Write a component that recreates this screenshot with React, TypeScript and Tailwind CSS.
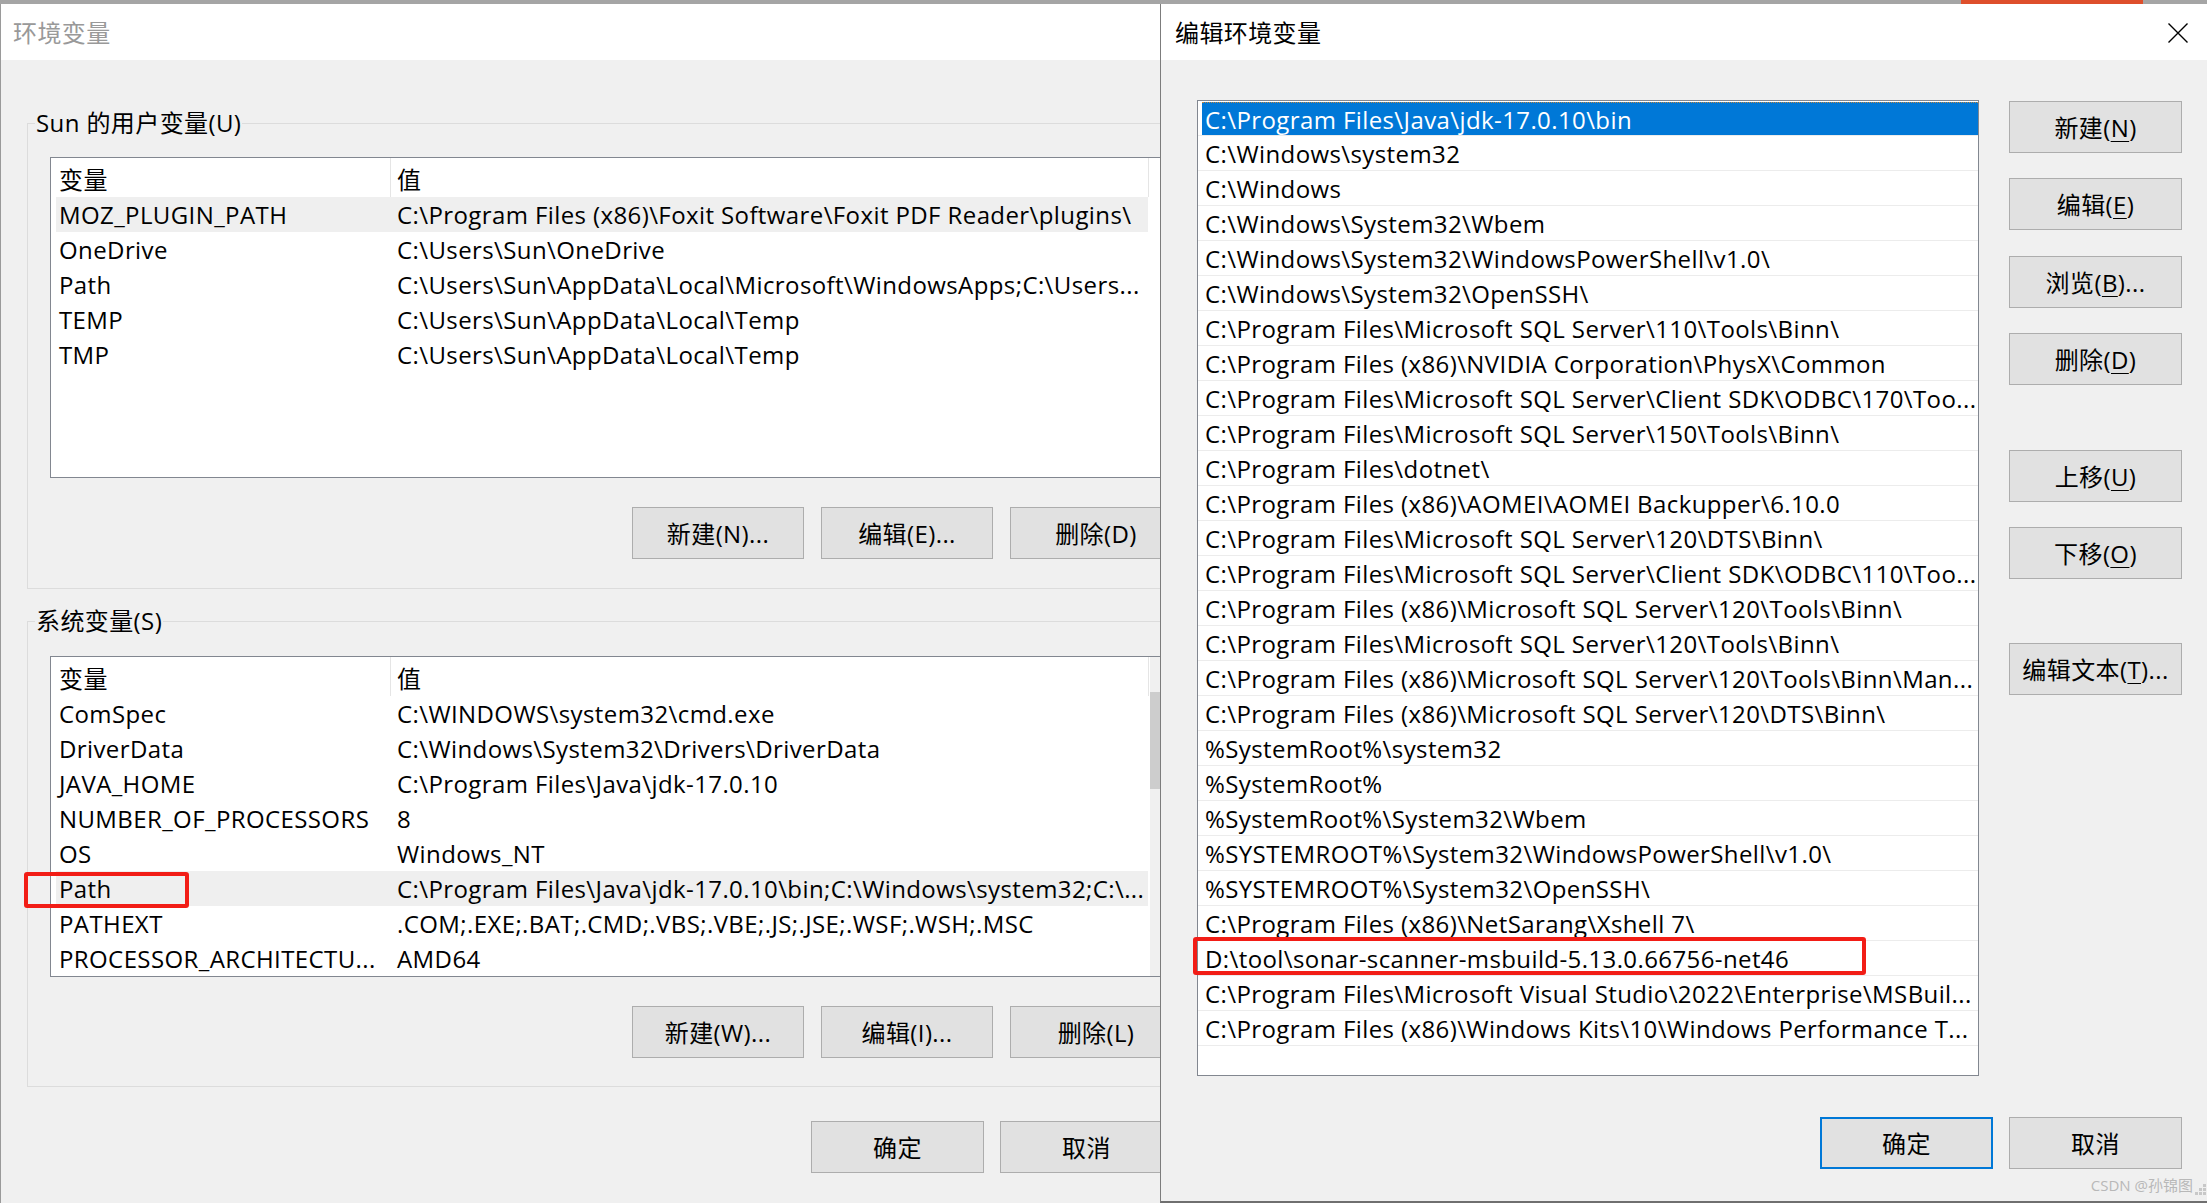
import type { ReactNode } from "react"

const userVars = [
  ["MOZ_PLUGIN_PATH", "C:\\Program Files (x86)\\Foxit Software\\Foxit PDF Reader\\plugins\\"],
  ["OneDrive", "C:\\Users\\Sun\\OneDrive"],
  ["Path", "C:\\Users\\Sun\\AppData\\Local\\Microsoft\\WindowsApps;C:\\Users..."],
  ["TEMP", "C:\\Users\\Sun\\AppData\\Local\\Temp"],
  ["TMP", "C:\\Users\\Sun\\AppData\\Local\\Temp"],
]

const sysVars = [
  ["ComSpec", "C:\\WINDOWS\\system32\\cmd.exe"],
  ["DriverData", "C:\\Windows\\System32\\Drivers\\DriverData"],
  ["JAVA_HOME", "C:\\Program Files\\Java\\jdk-17.0.10"],
  ["NUMBER_OF_PROCESSORS", "8"],
  ["OS", "Windows_NT"],
  ["Path", "C:\\Program Files\\Java\\jdk-17.0.10\\bin;C:\\Windows\\system32;C:\\..."],
  ["PATHEXT", ".COM;.EXE;.BAT;.CMD;.VBS;.VBE;.JS;.JSE;.WSF;.WSH;.MSC"],
  ["PROCESSOR_ARCHITECTU...", "AMD64"],
]

const paths = [
  "C:\\Program Files\\Java\\jdk-17.0.10\\bin",
  "C:\\Windows\\system32",
  "C:\\Windows",
  "C:\\Windows\\System32\\Wbem",
  "C:\\Windows\\System32\\WindowsPowerShell\\v1.0\\",
  "C:\\Windows\\System32\\OpenSSH\\",
  "C:\\Program Files\\Microsoft SQL Server\\110\\Tools\\Binn\\",
  "C:\\Program Files (x86)\\NVIDIA Corporation\\PhysX\\Common",
  "C:\\Program Files\\Microsoft SQL Server\\Client SDK\\ODBC\\170\\Too...",
  "C:\\Program Files\\Microsoft SQL Server\\150\\Tools\\Binn\\",
  "C:\\Program Files\\dotnet\\",
  "C:\\Program Files (x86)\\AOMEI\\AOMEI Backupper\\6.10.0",
  "C:\\Program Files\\Microsoft SQL Server\\120\\DTS\\Binn\\",
  "C:\\Program Files\\Microsoft SQL Server\\Client SDK\\ODBC\\110\\Too...",
  "C:\\Program Files (x86)\\Microsoft SQL Server\\120\\Tools\\Binn\\",
  "C:\\Program Files\\Microsoft SQL Server\\120\\Tools\\Binn\\",
  "C:\\Program Files (x86)\\Microsoft SQL Server\\120\\Tools\\Binn\\Man...",
  "C:\\Program Files (x86)\\Microsoft SQL Server\\120\\DTS\\Binn\\",
  "%SystemRoot%\\system32",
  "%SystemRoot%",
  "%SystemRoot%\\System32\\Wbem",
  "%SYSTEMROOT%\\System32\\WindowsPowerShell\\v1.0\\",
  "%SYSTEMROOT%\\System32\\OpenSSH\\",
  "C:\\Program Files (x86)\\NetSarang\\Xshell 7\\",
  "D:\\tool\\sonar-scanner-msbuild-5.13.0.66756-net46",
  "C:\\Program Files\\Microsoft Visual Studio\\2022\\Enterprise\\MSBuil...",
  "C:\\Program Files (x86)\\Windows Kits\\10\\Windows Performance T...",
]

function Btn({ children, className = "", primary }: { children: ReactNode; className?: string; primary?: boolean }) {
  return (
    <div
      className={`flex h-[52px] w-[172px] shrink-0 items-center justify-center bg-[#e1e1e1] ${
        primary ? "border-2 border-[#0078d7]" : "border border-[#adadad]"
      } ${className}`}
    >
      {children}
    </div>
  )
}

function Key({ k }: { k: string }) {
  return <span className="underline underline-offset-[4px] decoration-1">{k}</span>
}

function VarList({ rows, selected, scrollbar }: { rows: string[][]; selected: number; scrollbar?: boolean }) {
  return (
    <div className="ml-[22px] flex h-[321px] w-[1135px] border border-[#828790] bg-white">
      <div className="w-[1099px] overflow-hidden">
        {/* header */}
        <div className="flex h-[39px] items-center">
          <div className="h-full w-[340px] border-r border-[#e5e5e5] pl-[8px] pt-[4px] leading-[35px]">变量</div>
          <div className="h-full w-[758px] border-r border-[#e5e5e5] pl-[6px] pt-[4px] leading-[35px]">值</div>
        </div>
        {rows.map(([name, value], i) => (
          <div
            key={name + i}
            className={`ml-[5px] flex h-[35px] w-[1092px] items-center whitespace-nowrap ${i === selected ? "bg-[#efefef]" : ""}`}
          >
            <div className="w-[334px] overflow-hidden pl-[3px]">{name}</div>
            <div className="flex-1 overflow-hidden pl-[7px]">{value}</div>
          </div>
        ))}
      </div>
      {scrollbar && (
        <div className="w-[34px] bg-[#f0f0f0] pt-[35px]">
          <div className="h-[97px] w-full bg-[#cdcdcd]" />
        </div>
      )}
    </div>
  )
}

export default function App() {
  return (
    <div className="relative flex h-[1203px] w-[2207px] flex-col overflow-hidden bg-white font-['Open_Sans','Noto_Sans_CJK_SC',sans-serif] text-[24px] leading-[35px] tracking-[0.4px] text-black">
      {/* strip of the window behind */}
      <div className="flex h-[4px] shrink-0 bg-[#a5a5a5]">
        <div className="ml-[1961px] w-[182px] bg-[#de4f2c]" />
      </div>

      <div className="flex flex-1">
        {/* 环境变量 (inactive, partly covered) */}
        <div className="flex w-[1160px] shrink-0 flex-col overflow-hidden border-l border-[#9a9a9a]">
          <div className="flex h-[56px] shrink-0 items-center bg-white pl-[12px] text-[#999999]">环境变量</div>
          <div className="flex-1 bg-[#f0f0f0]">
            <fieldset className="ml-[26px] mt-[48px] w-[1180px] border border-[#dcdcdc] pb-[29px] pt-[19px]">
              <legend className="ml-[7px] px-[1px] leading-[30px]">Sun 的用户变量(U)</legend>
              <VarList rows={userVars} selected={0} />
              <div className="mt-[29px] flex justify-end gap-[17px] pr-[24px]">
                <Btn>新建(N)...</Btn>
                <Btn>编辑(E)...</Btn>
                <Btn>删除(D)</Btn>
              </div>
            </fieldset>

            <fieldset className="ml-[26px] mt-[17px] w-[1180px] border border-[#dcdcdc] pb-[28px] pt-[20px]">
              <legend className="ml-[7px] px-[1px] leading-[30px]">系统变量(S)</legend>
              <VarList rows={sysVars} selected={5} scrollbar />
              <div className="mt-[29px] flex justify-end gap-[17px] pr-[24px]">
                <Btn>新建(W)...</Btn>
                <Btn>编辑(I)...</Btn>
                <Btn>删除(L)</Btn>
              </div>
            </fieldset>

            <div className="mt-[34px] flex gap-[16px] pl-[810px]">
              <Btn className="h-[51px] w-[173px]">确定</Btn>
              <Btn className="h-[51px] w-[173px]">取消</Btn>
            </div>
          </div>
        </div>

        {/* 编辑环境变量 */}
        <div className="relative flex flex-1 flex-col border-b-2 border-l border-b-[#6f6f6f] border-l-[#7c7c7c] bg-[#f0f0f0]">
          <div className="flex h-[56px] shrink-0 items-center justify-between bg-white pl-[14px] pr-[19px]">
            <span>编辑环境变量</span>
            <svg width="20" height="20" viewBox="0 0 20 20" className="mt-[1px]">
              <path d="M0.5 0.5 L19.5 19.5 M19.5 0.5 L0.5 19.5" stroke="#000" strokeWidth="1.4" fill="none" />
            </svg>
          </div>

          <div className="flex pl-[36px] pt-[40px]">
            <div className="h-[976px] w-[782px] overflow-hidden border border-[#828790] bg-white">
              {paths.map((p, i) => (
                <div key={i} className="h-[35px] whitespace-nowrap border-b border-[#ececec] pt-[1px]">
                  <div
                    className={`ml-[4px] h-[33px] overflow-hidden pl-[3px] leading-[33px] ${
                      i === 0 ? "border-t border-dotted border-[#c7893e] bg-[#0078d7] text-white" : ""
                    }`}
                  >
                    {p}
                  </div>
                </div>
              ))}
            </div>

            <div className="ml-[30px] flex w-[173px] flex-col">
              <Btn className="mt-[1px] w-[173px]">
                新建(<Key k="N" />)
              </Btn>
              <Btn className="mt-[25px] w-[173px]">
                编辑(<Key k="E" />)
              </Btn>
              <Btn className="mt-[26px] w-[173px]">
                浏览(<Key k="B" />)...
              </Btn>
              <Btn className="mt-[25px] w-[173px]">
                删除(<Key k="D" />)
              </Btn>
              <Btn className="mt-[65px] w-[173px]">
                上移(<Key k="U" />)
              </Btn>
              <Btn className="mt-[25px] w-[173px]">
                下移(<Key k="O" />)
              </Btn>
              <Btn className="mt-[64px] w-[173px]">
                编辑文本(<Key k="T" />)...
              </Btn>
            </div>
          </div>

          <div className="mt-[41px] flex justify-end gap-[16px] pr-[25px]">
            <Btn primary className="h-[51px] w-[173px]">
              确定
            </Btn>
            <Btn className="h-[51px] w-[173px]">取消</Btn>
          </div>

          {/* watermark */}
          <div className="absolute bottom-[6px] right-[14px] text-[15px] leading-[20px] tracking-normal text-[#b8b8b8]">
            CSDN @孙锦图
          </div>
          {/* size grip */}
          <svg width="12" height="12" viewBox="0 0 12 12" className="absolute bottom-[5px] right-0">
            <rect x="8" y="0" width="3" height="3" fill="#c8c8c8" />
            <rect x="4" y="4" width="3" height="3" fill="#c8c8c8" />
            <rect x="8" y="4" width="3" height="3" fill="#c8c8c8" />
            <rect x="0" y="8" width="3" height="3" fill="#c8c8c8" />
            <rect x="4" y="8" width="3" height="3" fill="#c8c8c8" />
            <rect x="8" y="8" width="3" height="3" fill="#c8c8c8" />
          </svg>
        </div>
      </div>

      {/* red annotations */}
      <div className="absolute left-[24px] top-[872px] h-[36px] w-[165px] rounded-[3px] border-[4px] border-[#f21d16]" />
      <div className="absolute left-[1193px] top-[937px] h-[38px] w-[673px] rounded-[3px] border-[4px] border-[#f21d16]" />
    </div>
  )
}
